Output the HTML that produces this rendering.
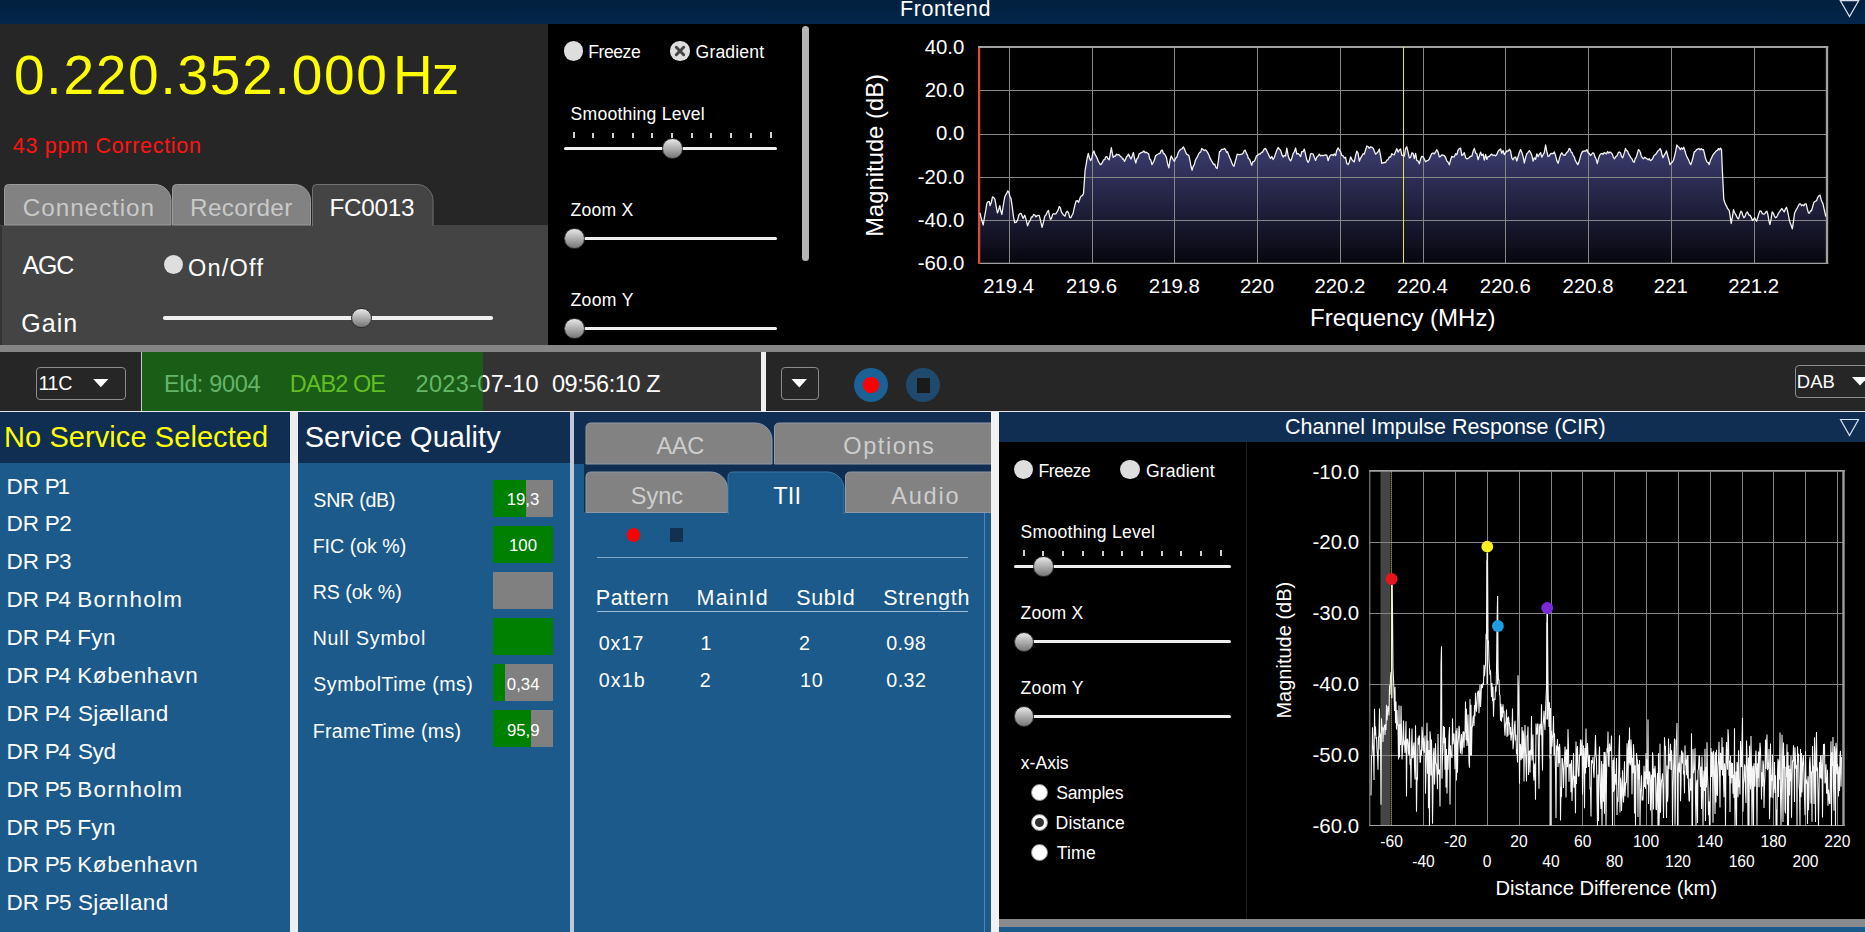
<!DOCTYPE html>
<html><head><meta charset="utf-8"><title>DAB Receiver</title>
<style>
html,body{margin:0;padding:0;}
body{width:1865px;height:932px;overflow:hidden;background:#262626;position:relative;font-family:"Liberation Sans",sans-serif;}
.t{position:absolute;white-space:pre;line-height:1;font-family:"Liberation Sans",sans-serif;}
svg{position:absolute;left:0;top:0;overflow:visible;}
.thumb{position:absolute;width:20.6px;height:20.6px;border-radius:50%;box-sizing:border-box;border:1px solid #2e2e2e;background:linear-gradient(#e2e2e2 5%,#b4b4b4 45%,#7c7c7c 95%);}
.track{position:absolute;height:3.4px;border-radius:1.7px;background:#f0f0f0;}
.dot{position:absolute;border-radius:50%;}
</style></head><body>
<div style="position:absolute;left:0px;top:0px;width:1865px;height:24px;background:linear-gradient(#02203f,#04264c);"></div>
<span class="t " style="left:899.88px;top:-1.00px;font-size:21.5px;letter-spacing:0.630px;color:#fff;">Frontend</span>
<svg width="1865" height="24"><path d="M1840.3 0.6 L1858.7 0.6 L1849.5 16.6 Z" fill="none" stroke="#d6e2f0" stroke-width="1.2"/></svg>
<div style="position:absolute;left:0px;top:24px;width:548px;height:321px;background:#262626;"></div>
<span class="t " style="left:14.00px;top:48.00px;font-size:55px;letter-spacing:1.767px;color:#ffff00;">0.220.352.000</span>
<span class="t " style="left:393.10px;top:48.00px;font-size:55px;letter-spacing:-1.150px;color:#ffff00;">Hz</span>
<span class="t " style="left:12.77px;top:136.00px;font-size:21.5px;letter-spacing:0.706px;color:#ff1414;">43 ppm Correction</span>
<div style="position:absolute;left:0px;top:225px;width:548px;height:120px;background:#444444;"></div>
<svg width="1865" height="932"><path d="M4.5 225 L4.5 188.5 Q4.5 184.5 8.5 184.5 L155.0 184.5 C163.8 184.5 171 191.7 171 200.5 L171 225 Z" fill="#828282" stroke="#9a9a9a" stroke-width="1"/></svg>
<svg width="1865" height="932"><path d="M172.5 225 L172.5 188.5 Q172.5 184.5 176.5 184.5 L294.5 184.5 C303.3 184.5 310.5 191.7 310.5 200.5 L310.5 225 Z" fill="#828282" stroke="#9a9a9a" stroke-width="1"/></svg>
<svg width="1865" height="932"><path d="M312.5 226 L312.5 188.5 Q312.5 184.5 316.5 184.5 L417.0 184.5 C425.8 184.5 433 191.7 433 200.5 L433 226 Z" fill="#444444" stroke="#707070" stroke-width="1"/></svg>
<div style="position:absolute;left:313px;top:224.5px;width:119.5px;height:2.5px;background:#444444;"></div>
<span class="t " style="left:22.79px;top:196.00px;font-size:24.3px;letter-spacing:0.926px;color:#c9c9c9;">Connection</span>
<span class="t " style="left:190.06px;top:196.00px;font-size:24.3px;letter-spacing:0.331px;color:#c9c9c9;">Recorder</span>
<span class="t " style="left:329.56px;top:196.00px;font-size:24.3px;letter-spacing:-0.294px;color:#ffffff;">FC0013</span>
<span class="t " style="left:22.50px;top:253.00px;font-size:25px;letter-spacing:-1.125px;color:#fff;">AGC</span>
<div style="position:absolute;left:0px;top:226px;width:1.5px;height:119px;background:#343434;"></div>
<div class="dot" style="left:163.5px;top:255px;width:19px;height:19px;background:#dedede"></div>
<span class="t " style="left:187.94px;top:257.00px;font-size:23.5px;letter-spacing:1.241px;color:#fff;">On/Off</span>
<span class="t " style="left:21.25px;top:311.00px;font-size:25px;letter-spacing:1.042px;color:#fff;">Gain</span>
<div class="track" style="left:353.5px;top:316.3px;width:139.0px"></div>
<div class="track" style="left:163px;top:316.3px;width:198.5px"></div>
<div class="thumb" style="left:351.2px;top:307.7px"></div>
<div style="position:absolute;left:548px;top:24px;width:1317px;height:321px;background:#000000;"></div>
<div class="dot" style="left:563.75px;top:41.25px;width:19.5px;height:19.5px;background:#dedede"></div>
<span class="t " style="left:588.19px;top:44.00px;font-size:17.6px;letter-spacing:-0.445px;color:#fff;">Freeze</span>
<div class="dot" style="left:670.25px;top:41.25px;width:19.5px;height:19.5px;background:#dedede"></div>
<svg width="1865" height="932"><path d="M676.3 47.3 L683.7 54.7 M683.7 47.3 L676.3 54.7" stroke="#464646" stroke-width="3" stroke-linecap="round"/></svg>
<span class="t " style="left:695.62px;top:44.00px;font-size:17.6px;letter-spacing:0.139px;color:#fff;">Gradient</span>
<span class="t " style="left:570.61px;top:106.00px;font-size:17.6px;letter-spacing:0.207px;color:#fff;">Smoothing Level</span>
<div class="track" style="left:664.6px;top:146.9px;width:112.89999999999998px"></div>
<div class="track" style="left:564px;top:146.9px;width:108.60000000000002px"></div>
<div style="position:absolute;left:572.50px;top:131.5px;width:2px;height:6.5px;background:#cfcfcf"></div>
<div style="position:absolute;left:592.21px;top:133px;width:2px;height:5px;background:#cfcfcf"></div>
<div style="position:absolute;left:611.92px;top:133px;width:2px;height:5px;background:#cfcfcf"></div>
<div style="position:absolute;left:631.63px;top:133px;width:2px;height:5px;background:#cfcfcf"></div>
<div style="position:absolute;left:651.34px;top:133px;width:2px;height:5px;background:#cfcfcf"></div>
<div style="position:absolute;left:671.05px;top:133px;width:2px;height:5px;background:#cfcfcf"></div>
<div style="position:absolute;left:690.76px;top:133px;width:2px;height:5px;background:#cfcfcf"></div>
<div style="position:absolute;left:710.47px;top:133px;width:2px;height:5px;background:#cfcfcf"></div>
<div style="position:absolute;left:730.18px;top:133px;width:2px;height:5px;background:#cfcfcf"></div>
<div style="position:absolute;left:749.89px;top:133px;width:2px;height:5px;background:#cfcfcf"></div>
<div style="position:absolute;left:769.60px;top:131.5px;width:2px;height:6.5px;background:#cfcfcf"></div>
<div class="thumb" style="left:662.3000000000001px;top:138.29999999999998px"></div>
<span class="t " style="left:570.47px;top:202.00px;font-size:17.6px;letter-spacing:0.256px;color:#fff;">Zoom X</span>
<div class="track" style="left:566.7px;top:236.70000000000002px;width:210.79999999999995px"></div>
<div class="track" style="left:564px;top:236.70000000000002px;width:10.700000000000045px"></div>
<div class="thumb" style="left:564.4000000000001px;top:228.1px"></div>
<span class="t " style="left:570.47px;top:292.00px;font-size:17.6px;letter-spacing:0.326px;color:#fff;">Zoom Y</span>
<div class="track" style="left:566.7px;top:326.6px;width:210.79999999999995px"></div>
<div class="track" style="left:564px;top:326.6px;width:10.700000000000045px"></div>
<div class="thumb" style="left:564.4000000000001px;top:318.0px"></div>
<div style="position:absolute;left:802px;top:25.5px;width:7px;height:235px;border-radius:3.5px;background:#b4b4b4"></div>
<svg width="1865" height="932"><defs><linearGradient id="g1" gradientUnits="userSpaceOnUse" x1="0" y1="150" x2="0" y2="263"><stop offset="0" stop-color="#3a3a6c"/><stop offset="1" stop-color="#07070f"/></linearGradient></defs><polygon points="980.0,263.5 980.0,212.9 981.1,217.8 982.1,221.3 983.2,225.0 984.4,217.6 985.7,210.7 986.9,203.2 988.1,201.7 989.3,201.6 990.1,205.6 991.3,202.5 992.5,196.8 993.7,197.6 994.9,199.2 996.2,206.4 997.4,212.9 998.6,210.2 999.8,205.6 1000.8,211.0 1001.9,214.5 1003.2,206.0 1004.6,197.6 1005.7,194.8 1006.8,193.2 1007.8,190.8 1008.9,192.3 1010.0,196.8 1011.0,198.4 1012.3,207.3 1013.5,216.9 1014.7,222.5 1016.1,222.3 1017.5,220.1 1019.1,214.5 1020.1,213.4 1021.2,213.7 1022.1,215.8 1023.1,218.5 1024.7,215.3 1025.7,218.1 1026.7,222.1 1027.6,225.8 1029.0,222.1 1030.4,220.1 1031.4,216.9 1032.5,217.0 1033.6,214.5 1034.8,215.1 1036.0,216.9 1037.1,215.7 1038.1,215.3 1039.2,215.3 1040.2,219.3 1041.1,223.2 1042.1,227.4 1043.5,222.1 1044.8,216.1 1046.1,214.7 1047.3,212.0 1048.5,210.5 1049.5,216.1 1050.5,219.3 1051.5,218.4 1052.6,214.3 1053.7,213.7 1054.8,214.1 1055.8,213.8 1056.9,212.1 1058.1,210.1 1059.3,206.5 1060.4,207.9 1061.5,212.2 1062.5,213.7 1063.8,215.3 1065.0,216.1 1066.2,212.3 1067.4,211.3 1068.6,213.1 1069.8,217.7 1070.9,217.6 1071.9,215.5 1073.0,213.7 1074.1,208.7 1075.2,204.0 1076.2,200.8 1077.4,200.6 1078.6,202.4 1079.9,198.5 1081.1,196.0 1082.3,195.6 1083.5,193.6 1085.1,170.2 1086.2,164.2 1087.2,158.0 1088.3,153.3 1089.5,158.1 1090.7,160.6 1091.8,158.2 1092.9,153.2 1093.9,150.9 1095.0,154.4 1096.1,156.1 1097.2,158.2 1098.2,161.1 1099.3,162.9 1100.4,164.6 1101.4,164.1 1102.5,162.2 1103.6,159.8 1104.7,159.7 1105.7,156.8 1106.8,156.6 1108.0,158.7 1109.2,159.8 1110.3,153.8 1111.3,147.7 1112.3,153.2 1113.2,157.4 1114.3,156.1 1115.4,156.3 1116.5,154.1 1117.5,154.9 1118.5,154.7 1119.5,155.2 1120.5,156.6 1121.5,156.8 1122.5,159.0 1123.5,158.9 1124.5,161.4 1125.5,159.5 1126.5,156.8 1127.5,155.9 1128.5,154.1 1129.7,156.6 1131.0,159.0 1132.2,155.9 1133.4,152.5 1134.6,158.8 1135.8,163.0 1136.9,158.7 1137.9,158.0 1139.0,154.1 1140.2,153.2 1141.4,152.7 1142.6,152.2 1143.8,150.9 1145.0,152.7 1146.2,152.2 1147.5,153.1 1148.7,154.1 1149.7,158.9 1150.8,159.9 1151.9,164.6 1153.1,162.6 1154.3,160.2 1155.5,156.0 1156.7,154.9 1157.8,154.3 1159.0,153.5 1160.1,153.3 1161.2,150.6 1162.3,150.1 1163.3,153.3 1164.4,153.8 1165.4,155.5 1166.4,157.4 1167.6,163.7 1168.8,167.8 1170.0,160.5 1171.2,155.8 1172.3,158.2 1173.3,159.9 1174.4,161.4 1175.6,158.3 1176.8,157.2 1178.0,153.2 1179.2,150.9 1180.2,149.8 1181.3,149.0 1182.3,148.7 1183.3,146.9 1184.3,148.5 1185.4,151.5 1186.5,154.1 1187.7,154.7 1188.9,155.8 1190.0,160.7 1191.0,166.3 1192.1,170.2 1193.2,166.4 1194.3,164.7 1195.3,160.6 1196.4,158.3 1197.5,156.6 1198.6,153.9 1199.6,152.6 1200.7,151.9 1201.8,148.5 1203.0,149.5 1204.2,150.5 1205.4,149.8 1206.6,150.9 1207.8,152.8 1209.0,155.2 1210.2,158.4 1211.4,160.6 1212.6,162.6 1213.7,164.6 1214.8,164.1 1215.9,167.6 1217.1,168.6 1218.3,161.3 1219.5,151.7 1220.5,151.3 1221.5,149.3 1222.5,149.4 1223.5,149.3 1224.5,148.5 1225.5,149.7 1226.5,152.3 1227.5,151.7 1228.6,154.7 1229.7,157.5 1230.7,159.8 1231.8,162.7 1232.9,165.2 1234.0,166.2 1235.0,162.5 1236.1,158.5 1237.2,154.1 1238.4,154.5 1239.6,154.7 1240.8,154.4 1242.0,154.1 1243.1,153.3 1244.2,150.7 1245.2,150.1 1246.3,153.1 1247.4,155.1 1248.4,158.5 1249.5,159.2 1250.6,162.0 1251.7,165.4 1252.9,161.7 1254.1,161.3 1255.3,159.3 1256.5,155.8 1257.7,155.4 1258.9,153.8 1260.1,154.2 1261.3,152.5 1262.3,152.3 1263.3,150.7 1264.3,148.8 1265.3,148.5 1266.4,150.0 1267.4,152.3 1268.4,154.0 1269.4,156.6 1270.6,158.4 1271.8,156.5 1273.1,159.5 1274.3,157.5 1275.6,153.6 1276.8,150.2 1278.1,147.5 1279.3,149.0 1280.6,150.2 1281.8,154.4 1283.1,157.0 1284.3,155.5 1285.6,156.0 1286.8,148.2 1288.1,155.5 1289.3,159.1 1290.6,160.9 1291.8,158.3 1293.1,153.5 1294.3,151.8 1295.6,148.0 1296.8,154.1 1298.1,153.4 1299.3,154.7 1300.6,156.5 1301.8,151.7 1303.1,151.6 1304.3,149.1 1305.6,154.7 1306.8,159.9 1308.1,162.4 1309.3,160.3 1310.6,153.9 1311.8,153.5 1313.1,154.0 1314.3,157.2 1315.6,160.4 1316.8,157.2 1318.1,156.0 1319.3,154.1 1320.6,156.0 1321.8,155.2 1323.1,155.8 1324.3,155.1 1325.6,155.0 1326.8,155.2 1328.1,160.7 1329.3,157.1 1330.6,155.0 1331.8,154.6 1333.1,155.6 1334.3,153.9 1335.6,155.5 1336.8,150.2 1338.1,147.9 1339.3,150.0 1340.6,151.6 1341.8,155.4 1343.1,155.8 1344.3,158.0 1345.6,157.3 1346.8,163.5 1348.1,164.5 1349.3,162.4 1350.6,156.9 1351.8,159.4 1353.1,161.1 1354.3,161.9 1355.6,155.4 1356.8,151.2 1358.1,153.4 1359.3,161.2 1360.6,158.1 1361.8,156.1 1363.1,153.8 1364.3,154.0 1365.6,149.9 1366.8,146.0 1368.1,146.6 1369.3,148.3 1370.6,146.8 1371.8,147.3 1373.1,148.3 1374.3,151.1 1375.6,154.2 1376.8,153.1 1378.1,151.7 1379.3,149.2 1380.6,156.1 1381.8,163.4 1383.1,162.8 1384.3,162.5 1385.6,162.5 1386.8,160.2 1388.1,159.6 1389.3,157.0 1390.6,157.1 1391.8,153.7 1393.1,154.6 1394.3,154.8 1395.6,151.4 1396.8,148.8 1398.1,152.1 1399.3,150.2 1400.6,149.0 1401.8,155.2 1403.1,155.7 1404.3,156.1 1405.6,148.4 1406.8,146.8 1408.1,152.2 1409.3,157.8 1410.6,157.3 1411.8,152.8 1413.1,153.4 1414.3,158.6 1415.6,153.4 1416.8,160.7 1418.1,160.9 1419.3,163.7 1420.6,159.1 1421.8,156.3 1423.1,156.7 1424.3,159.1 1425.6,161.7 1426.8,160.8 1428.1,160.3 1429.3,159.3 1430.6,156.0 1431.8,153.6 1433.1,153.0 1434.3,153.9 1435.6,151.8 1436.8,149.7 1438.1,152.1 1439.3,156.8 1440.6,156.3 1441.8,155.0 1443.1,155.2 1444.3,155.7 1445.6,157.5 1446.8,160.9 1448.1,162.2 1449.3,164.8 1450.6,160.0 1451.8,156.3 1453.1,157.1 1454.3,156.7 1455.6,153.8 1456.8,154.7 1458.1,150.2 1459.3,148.6 1460.6,148.2 1461.8,155.3 1463.1,154.7 1464.3,152.7 1465.6,157.7 1466.8,158.9 1468.1,158.4 1469.3,157.5 1470.6,156.2 1471.8,156.3 1473.1,151.3 1474.3,148.4 1475.6,152.9 1476.8,153.8 1478.1,159.7 1479.3,156.1 1480.6,152.1 1481.8,155.5 1483.1,154.1 1484.3,160.0 1485.6,154.5 1486.8,159.4 1488.1,156.4 1489.3,156.6 1490.6,154.8 1491.8,154.2 1493.1,155.5 1494.3,155.0 1495.6,155.9 1496.8,154.5 1498.1,151.3 1499.3,150.0 1500.6,149.0 1501.8,153.3 1503.1,150.5 1504.3,154.6 1505.6,152.7 1506.8,150.8 1508.1,151.3 1509.3,149.2 1510.6,151.0 1511.8,157.9 1513.1,159.8 1514.3,157.5 1515.6,157.0 1516.8,161.0 1518.1,156.7 1519.3,152.6 1520.6,149.6 1521.8,152.5 1523.1,156.6 1524.3,163.0 1525.6,157.5 1526.8,153.7 1528.1,152.4 1529.3,150.6 1530.6,152.6 1531.8,155.2 1533.1,161.1 1534.3,157.8 1535.6,159.3 1536.8,153.9 1538.1,156.6 1539.3,154.3 1540.6,152.6 1541.8,157.1 1543.1,154.8 1544.3,152.6 1545.6,145.0 1546.8,151.4 1548.1,156.5 1549.3,156.0 1550.6,153.6 1551.8,153.4 1553.1,153.6 1554.3,152.0 1555.6,155.6 1556.8,160.6 1558.1,163.3 1559.3,158.9 1560.6,154.6 1561.8,152.8 1563.1,154.8 1565.0,155.4 1566.0,153.5 1567.1,152.3 1568.1,151.2 1569.2,148.5 1570.1,149.1 1571.1,152.1 1572.1,152.6 1573.1,155.4 1574.2,156.8 1575.4,160.7 1576.5,162.5 1577.7,164.6 1578.8,162.4 1580.0,158.1 1581.2,153.9 1582.3,151.9 1583.5,151.1 1584.6,151.0 1585.8,151.2 1586.9,149.6 1588.1,152.7 1589.2,153.4 1590.4,155.4 1591.5,154.4 1592.7,152.9 1593.8,153.1 1595.0,156.9 1596.2,159.3 1597.3,163.5 1598.5,158.6 1599.6,155.4 1600.8,153.8 1601.9,153.3 1603.1,154.4 1604.2,152.6 1605.4,153.1 1606.5,153.9 1607.7,151.5 1608.8,153.1 1610.0,151.9 1611.2,152.8 1612.3,154.2 1613.5,157.6 1614.6,158.8 1615.8,156.5 1616.9,155.9 1618.1,152.9 1619.2,151.9 1620.4,152.8 1621.5,156.4 1622.7,157.7 1623.6,155.1 1624.5,152.4 1625.5,148.5 1626.5,150.7 1627.5,150.9 1628.6,154.0 1629.6,155.4 1630.8,157.6 1631.9,158.8 1633.1,161.6 1634.2,162.3 1635.3,158.5 1636.3,157.1 1637.4,153.3 1638.4,149.6 1639.4,150.5 1640.4,152.5 1641.3,156.0 1642.3,157.7 1643.5,158.7 1644.6,157.3 1645.8,158.1 1646.9,158.8 1648.1,159.7 1649.2,158.6 1650.4,160.6 1651.5,160.0 1652.7,158.4 1653.9,155.7 1655.0,154.8 1656.2,153.7 1657.3,151.9 1658.2,150.6 1659.2,150.0 1660.1,148.5 1661.1,150.7 1662.1,155.3 1663.1,157.7 1664.2,155.1 1665.4,153.4 1666.5,150.8 1667.7,155.7 1668.9,159.8 1670.0,164.6 1671.2,162.8 1672.3,162.2 1673.5,160.0 1674.6,156.1 1675.8,150.7 1676.9,145.0 1678.1,146.7 1679.2,147.6 1680.4,149.6 1681.5,147.8 1682.7,149.2 1683.9,147.3 1685.0,151.3 1686.2,155.0 1687.3,157.7 1688.5,159.6 1689.6,162.6 1690.8,164.6 1691.9,161.5 1693.1,157.0 1694.2,151.9 1695.4,151.3 1696.5,149.7 1697.7,149.2 1698.9,148.5 1700.0,149.7 1701.2,148.7 1702.3,149.8 1703.5,149.6 1704.4,153.3 1705.3,157.5 1706.2,160.0 1707.2,162.3 1708.2,162.6 1709.2,164.6 1710.4,160.3 1711.5,157.9 1712.7,155.4 1713.9,153.7 1715.0,152.5 1716.2,150.8 1717.3,150.4 1718.5,148.5 1719.5,149.8 1720.5,148.1 1721.5,149.6 1722.4,171.5 1723.8,199.2 1724.7,202.3 1725.6,204.6 1726.6,206.2 1727.5,208.6 1728.4,209.4 1729.3,210.8 1730.2,216.6 1731.2,223.5 1732.3,217.4 1733.5,209.6 1734.4,212.3 1735.3,213.9 1736.2,215.4 1737.4,218.1 1738.6,218.9 1739.7,214.7 1740.9,211.2 1741.9,212.4 1742.9,215.7 1743.9,217.7 1745.0,216.5 1746.2,213.1 1747.3,211.9 1748.2,213.7 1749.2,215.3 1750.1,215.4 1751.2,217.3 1752.4,220.5 1753.6,219.3 1754.7,217.7 1755.6,219.9 1756.6,221.2 1757.7,217.6 1758.9,213.5 1760.0,210.8 1761.2,211.3 1762.3,213.7 1763.5,214.2 1764.6,213.9 1765.8,212.1 1766.9,211.2 1767.9,214.7 1768.9,220.9 1769.9,224.6 1771.1,218.9 1772.2,211.9 1773.3,213.2 1774.4,216.0 1775.5,217.7 1776.5,217.1 1777.5,215.5 1778.5,213.1 1779.6,211.6 1780.8,209.9 1781.9,208.5 1783.1,210.4 1784.2,211.9 1785.4,208.9 1786.6,207.3 1787.5,210.8 1788.4,215.0 1789.3,220.0 1790.3,223.4 1791.3,225.5 1792.3,228.8 1793.5,221.1 1794.6,213.1 1795.6,210.9 1796.6,209.3 1797.6,207.3 1798.6,205.3 1799.5,203.9 1800.4,203.9 1801.6,205.7 1802.7,204.8 1803.9,205.7 1805.0,203.8 1806.2,203.9 1807.3,208.8 1808.5,213.1 1809.5,213.0 1810.5,210.7 1811.5,210.8 1812.6,207.0 1813.8,202.7 1814.7,201.6 1815.6,201.2 1816.6,200.4 1817.7,197.5 1818.9,195.7 1820.0,195.1 1821.0,199.2 1822.0,201.8 1823.0,203.9 1823.9,208.1 1824.9,212.5 1825.8,216.5 1825.8,263.5" fill="url(#g1)"/><line x1="1009.5" y1="47" x2="1009.5" y2="263.5" stroke="#868686" stroke-width="1"/><line x1="1092.5" y1="47" x2="1092.5" y2="263.5" stroke="#868686" stroke-width="1"/><line x1="1174.5" y1="47" x2="1174.5" y2="263.5" stroke="#868686" stroke-width="1"/><line x1="1257.5" y1="47" x2="1257.5" y2="263.5" stroke="#868686" stroke-width="1"/><line x1="1340.5" y1="47" x2="1340.5" y2="263.5" stroke="#868686" stroke-width="1"/><line x1="1423.5" y1="47" x2="1423.5" y2="263.5" stroke="#868686" stroke-width="1"/><line x1="1505.5" y1="47" x2="1505.5" y2="263.5" stroke="#868686" stroke-width="1"/><line x1="1588.5" y1="47" x2="1588.5" y2="263.5" stroke="#868686" stroke-width="1"/><line x1="1671.5" y1="47" x2="1671.5" y2="263.5" stroke="#868686" stroke-width="1"/><line x1="1754.5" y1="47" x2="1754.5" y2="263.5" stroke="#868686" stroke-width="1"/><line x1="979" y1="90.5" x2="1827" y2="90.5" stroke="#868686" stroke-width="1"/><line x1="979" y1="134.5" x2="1827" y2="134.5" stroke="#868686" stroke-width="1"/><line x1="979" y1="177.5" x2="1827" y2="177.5" stroke="#868686" stroke-width="1"/><line x1="979" y1="220.5" x2="1827" y2="220.5" stroke="#868686" stroke-width="1"/><line x1="978" y1="47" x2="1828.2" y2="47" stroke="#a2a2a2" stroke-width="1.8"/><line x1="1827" y1="46.1" x2="1827" y2="264" stroke="#a0a0a0" stroke-width="2.4"/><line x1="978" y1="263.4" x2="1828.2" y2="263.4" stroke="#a2a2a2" stroke-width="1.2"/><line x1="979.1" y1="47.9" x2="979.1" y2="264" stroke="#d8483c" stroke-width="2.3"/><line x1="1403.5" y1="47" x2="1403.5" y2="263.5" stroke="#e6e63c" stroke-width="1"/><polyline points="980.0,212.9 981.1,217.8 982.1,221.3 983.2,225.0 984.4,217.6 985.7,210.7 986.9,203.2 988.1,201.7 989.3,201.6 990.1,205.6 991.3,202.5 992.5,196.8 993.7,197.6 994.9,199.2 996.2,206.4 997.4,212.9 998.6,210.2 999.8,205.6 1000.8,211.0 1001.9,214.5 1003.2,206.0 1004.6,197.6 1005.7,194.8 1006.8,193.2 1007.8,190.8 1008.9,192.3 1010.0,196.8 1011.0,198.4 1012.3,207.3 1013.5,216.9 1014.7,222.5 1016.1,222.3 1017.5,220.1 1019.1,214.5 1020.1,213.4 1021.2,213.7 1022.1,215.8 1023.1,218.5 1024.7,215.3 1025.7,218.1 1026.7,222.1 1027.6,225.8 1029.0,222.1 1030.4,220.1 1031.4,216.9 1032.5,217.0 1033.6,214.5 1034.8,215.1 1036.0,216.9 1037.1,215.7 1038.1,215.3 1039.2,215.3 1040.2,219.3 1041.1,223.2 1042.1,227.4 1043.5,222.1 1044.8,216.1 1046.1,214.7 1047.3,212.0 1048.5,210.5 1049.5,216.1 1050.5,219.3 1051.5,218.4 1052.6,214.3 1053.7,213.7 1054.8,214.1 1055.8,213.8 1056.9,212.1 1058.1,210.1 1059.3,206.5 1060.4,207.9 1061.5,212.2 1062.5,213.7 1063.8,215.3 1065.0,216.1 1066.2,212.3 1067.4,211.3 1068.6,213.1 1069.8,217.7 1070.9,217.6 1071.9,215.5 1073.0,213.7 1074.1,208.7 1075.2,204.0 1076.2,200.8 1077.4,200.6 1078.6,202.4 1079.9,198.5 1081.1,196.0 1082.3,195.6 1083.5,193.6 1085.1,170.2 1086.2,164.2 1087.2,158.0 1088.3,153.3 1089.5,158.1 1090.7,160.6 1091.8,158.2 1092.9,153.2 1093.9,150.9 1095.0,154.4 1096.1,156.1 1097.2,158.2 1098.2,161.1 1099.3,162.9 1100.4,164.6 1101.4,164.1 1102.5,162.2 1103.6,159.8 1104.7,159.7 1105.7,156.8 1106.8,156.6 1108.0,158.7 1109.2,159.8 1110.3,153.8 1111.3,147.7 1112.3,153.2 1113.2,157.4 1114.3,156.1 1115.4,156.3 1116.5,154.1 1117.5,154.9 1118.5,154.7 1119.5,155.2 1120.5,156.6 1121.5,156.8 1122.5,159.0 1123.5,158.9 1124.5,161.4 1125.5,159.5 1126.5,156.8 1127.5,155.9 1128.5,154.1 1129.7,156.6 1131.0,159.0 1132.2,155.9 1133.4,152.5 1134.6,158.8 1135.8,163.0 1136.9,158.7 1137.9,158.0 1139.0,154.1 1140.2,153.2 1141.4,152.7 1142.6,152.2 1143.8,150.9 1145.0,152.7 1146.2,152.2 1147.5,153.1 1148.7,154.1 1149.7,158.9 1150.8,159.9 1151.9,164.6 1153.1,162.6 1154.3,160.2 1155.5,156.0 1156.7,154.9 1157.8,154.3 1159.0,153.5 1160.1,153.3 1161.2,150.6 1162.3,150.1 1163.3,153.3 1164.4,153.8 1165.4,155.5 1166.4,157.4 1167.6,163.7 1168.8,167.8 1170.0,160.5 1171.2,155.8 1172.3,158.2 1173.3,159.9 1174.4,161.4 1175.6,158.3 1176.8,157.2 1178.0,153.2 1179.2,150.9 1180.2,149.8 1181.3,149.0 1182.3,148.7 1183.3,146.9 1184.3,148.5 1185.4,151.5 1186.5,154.1 1187.7,154.7 1188.9,155.8 1190.0,160.7 1191.0,166.3 1192.1,170.2 1193.2,166.4 1194.3,164.7 1195.3,160.6 1196.4,158.3 1197.5,156.6 1198.6,153.9 1199.6,152.6 1200.7,151.9 1201.8,148.5 1203.0,149.5 1204.2,150.5 1205.4,149.8 1206.6,150.9 1207.8,152.8 1209.0,155.2 1210.2,158.4 1211.4,160.6 1212.6,162.6 1213.7,164.6 1214.8,164.1 1215.9,167.6 1217.1,168.6 1218.3,161.3 1219.5,151.7 1220.5,151.3 1221.5,149.3 1222.5,149.4 1223.5,149.3 1224.5,148.5 1225.5,149.7 1226.5,152.3 1227.5,151.7 1228.6,154.7 1229.7,157.5 1230.7,159.8 1231.8,162.7 1232.9,165.2 1234.0,166.2 1235.0,162.5 1236.1,158.5 1237.2,154.1 1238.4,154.5 1239.6,154.7 1240.8,154.4 1242.0,154.1 1243.1,153.3 1244.2,150.7 1245.2,150.1 1246.3,153.1 1247.4,155.1 1248.4,158.5 1249.5,159.2 1250.6,162.0 1251.7,165.4 1252.9,161.7 1254.1,161.3 1255.3,159.3 1256.5,155.8 1257.7,155.4 1258.9,153.8 1260.1,154.2 1261.3,152.5 1262.3,152.3 1263.3,150.7 1264.3,148.8 1265.3,148.5 1266.4,150.0 1267.4,152.3 1268.4,154.0 1269.4,156.6 1270.6,158.4 1271.8,156.5 1273.1,159.5 1274.3,157.5 1275.6,153.6 1276.8,150.2 1278.1,147.5 1279.3,149.0 1280.6,150.2 1281.8,154.4 1283.1,157.0 1284.3,155.5 1285.6,156.0 1286.8,148.2 1288.1,155.5 1289.3,159.1 1290.6,160.9 1291.8,158.3 1293.1,153.5 1294.3,151.8 1295.6,148.0 1296.8,154.1 1298.1,153.4 1299.3,154.7 1300.6,156.5 1301.8,151.7 1303.1,151.6 1304.3,149.1 1305.6,154.7 1306.8,159.9 1308.1,162.4 1309.3,160.3 1310.6,153.9 1311.8,153.5 1313.1,154.0 1314.3,157.2 1315.6,160.4 1316.8,157.2 1318.1,156.0 1319.3,154.1 1320.6,156.0 1321.8,155.2 1323.1,155.8 1324.3,155.1 1325.6,155.0 1326.8,155.2 1328.1,160.7 1329.3,157.1 1330.6,155.0 1331.8,154.6 1333.1,155.6 1334.3,153.9 1335.6,155.5 1336.8,150.2 1338.1,147.9 1339.3,150.0 1340.6,151.6 1341.8,155.4 1343.1,155.8 1344.3,158.0 1345.6,157.3 1346.8,163.5 1348.1,164.5 1349.3,162.4 1350.6,156.9 1351.8,159.4 1353.1,161.1 1354.3,161.9 1355.6,155.4 1356.8,151.2 1358.1,153.4 1359.3,161.2 1360.6,158.1 1361.8,156.1 1363.1,153.8 1364.3,154.0 1365.6,149.9 1366.8,146.0 1368.1,146.6 1369.3,148.3 1370.6,146.8 1371.8,147.3 1373.1,148.3 1374.3,151.1 1375.6,154.2 1376.8,153.1 1378.1,151.7 1379.3,149.2 1380.6,156.1 1381.8,163.4 1383.1,162.8 1384.3,162.5 1385.6,162.5 1386.8,160.2 1388.1,159.6 1389.3,157.0 1390.6,157.1 1391.8,153.7 1393.1,154.6 1394.3,154.8 1395.6,151.4 1396.8,148.8 1398.1,152.1 1399.3,150.2 1400.6,149.0 1401.8,155.2 1403.1,155.7 1404.3,156.1 1405.6,148.4 1406.8,146.8 1408.1,152.2 1409.3,157.8 1410.6,157.3 1411.8,152.8 1413.1,153.4 1414.3,158.6 1415.6,153.4 1416.8,160.7 1418.1,160.9 1419.3,163.7 1420.6,159.1 1421.8,156.3 1423.1,156.7 1424.3,159.1 1425.6,161.7 1426.8,160.8 1428.1,160.3 1429.3,159.3 1430.6,156.0 1431.8,153.6 1433.1,153.0 1434.3,153.9 1435.6,151.8 1436.8,149.7 1438.1,152.1 1439.3,156.8 1440.6,156.3 1441.8,155.0 1443.1,155.2 1444.3,155.7 1445.6,157.5 1446.8,160.9 1448.1,162.2 1449.3,164.8 1450.6,160.0 1451.8,156.3 1453.1,157.1 1454.3,156.7 1455.6,153.8 1456.8,154.7 1458.1,150.2 1459.3,148.6 1460.6,148.2 1461.8,155.3 1463.1,154.7 1464.3,152.7 1465.6,157.7 1466.8,158.9 1468.1,158.4 1469.3,157.5 1470.6,156.2 1471.8,156.3 1473.1,151.3 1474.3,148.4 1475.6,152.9 1476.8,153.8 1478.1,159.7 1479.3,156.1 1480.6,152.1 1481.8,155.5 1483.1,154.1 1484.3,160.0 1485.6,154.5 1486.8,159.4 1488.1,156.4 1489.3,156.6 1490.6,154.8 1491.8,154.2 1493.1,155.5 1494.3,155.0 1495.6,155.9 1496.8,154.5 1498.1,151.3 1499.3,150.0 1500.6,149.0 1501.8,153.3 1503.1,150.5 1504.3,154.6 1505.6,152.7 1506.8,150.8 1508.1,151.3 1509.3,149.2 1510.6,151.0 1511.8,157.9 1513.1,159.8 1514.3,157.5 1515.6,157.0 1516.8,161.0 1518.1,156.7 1519.3,152.6 1520.6,149.6 1521.8,152.5 1523.1,156.6 1524.3,163.0 1525.6,157.5 1526.8,153.7 1528.1,152.4 1529.3,150.6 1530.6,152.6 1531.8,155.2 1533.1,161.1 1534.3,157.8 1535.6,159.3 1536.8,153.9 1538.1,156.6 1539.3,154.3 1540.6,152.6 1541.8,157.1 1543.1,154.8 1544.3,152.6 1545.6,145.0 1546.8,151.4 1548.1,156.5 1549.3,156.0 1550.6,153.6 1551.8,153.4 1553.1,153.6 1554.3,152.0 1555.6,155.6 1556.8,160.6 1558.1,163.3 1559.3,158.9 1560.6,154.6 1561.8,152.8 1563.1,154.8 1565.0,155.4 1566.0,153.5 1567.1,152.3 1568.1,151.2 1569.2,148.5 1570.1,149.1 1571.1,152.1 1572.1,152.6 1573.1,155.4 1574.2,156.8 1575.4,160.7 1576.5,162.5 1577.7,164.6 1578.8,162.4 1580.0,158.1 1581.2,153.9 1582.3,151.9 1583.5,151.1 1584.6,151.0 1585.8,151.2 1586.9,149.6 1588.1,152.7 1589.2,153.4 1590.4,155.4 1591.5,154.4 1592.7,152.9 1593.8,153.1 1595.0,156.9 1596.2,159.3 1597.3,163.5 1598.5,158.6 1599.6,155.4 1600.8,153.8 1601.9,153.3 1603.1,154.4 1604.2,152.6 1605.4,153.1 1606.5,153.9 1607.7,151.5 1608.8,153.1 1610.0,151.9 1611.2,152.8 1612.3,154.2 1613.5,157.6 1614.6,158.8 1615.8,156.5 1616.9,155.9 1618.1,152.9 1619.2,151.9 1620.4,152.8 1621.5,156.4 1622.7,157.7 1623.6,155.1 1624.5,152.4 1625.5,148.5 1626.5,150.7 1627.5,150.9 1628.6,154.0 1629.6,155.4 1630.8,157.6 1631.9,158.8 1633.1,161.6 1634.2,162.3 1635.3,158.5 1636.3,157.1 1637.4,153.3 1638.4,149.6 1639.4,150.5 1640.4,152.5 1641.3,156.0 1642.3,157.7 1643.5,158.7 1644.6,157.3 1645.8,158.1 1646.9,158.8 1648.1,159.7 1649.2,158.6 1650.4,160.6 1651.5,160.0 1652.7,158.4 1653.9,155.7 1655.0,154.8 1656.2,153.7 1657.3,151.9 1658.2,150.6 1659.2,150.0 1660.1,148.5 1661.1,150.7 1662.1,155.3 1663.1,157.7 1664.2,155.1 1665.4,153.4 1666.5,150.8 1667.7,155.7 1668.9,159.8 1670.0,164.6 1671.2,162.8 1672.3,162.2 1673.5,160.0 1674.6,156.1 1675.8,150.7 1676.9,145.0 1678.1,146.7 1679.2,147.6 1680.4,149.6 1681.5,147.8 1682.7,149.2 1683.9,147.3 1685.0,151.3 1686.2,155.0 1687.3,157.7 1688.5,159.6 1689.6,162.6 1690.8,164.6 1691.9,161.5 1693.1,157.0 1694.2,151.9 1695.4,151.3 1696.5,149.7 1697.7,149.2 1698.9,148.5 1700.0,149.7 1701.2,148.7 1702.3,149.8 1703.5,149.6 1704.4,153.3 1705.3,157.5 1706.2,160.0 1707.2,162.3 1708.2,162.6 1709.2,164.6 1710.4,160.3 1711.5,157.9 1712.7,155.4 1713.9,153.7 1715.0,152.5 1716.2,150.8 1717.3,150.4 1718.5,148.5 1719.5,149.8 1720.5,148.1 1721.5,149.6 1722.4,171.5 1723.8,199.2 1724.7,202.3 1725.6,204.6 1726.6,206.2 1727.5,208.6 1728.4,209.4 1729.3,210.8 1730.2,216.6 1731.2,223.5 1732.3,217.4 1733.5,209.6 1734.4,212.3 1735.3,213.9 1736.2,215.4 1737.4,218.1 1738.6,218.9 1739.7,214.7 1740.9,211.2 1741.9,212.4 1742.9,215.7 1743.9,217.7 1745.0,216.5 1746.2,213.1 1747.3,211.9 1748.2,213.7 1749.2,215.3 1750.1,215.4 1751.2,217.3 1752.4,220.5 1753.6,219.3 1754.7,217.7 1755.6,219.9 1756.6,221.2 1757.7,217.6 1758.9,213.5 1760.0,210.8 1761.2,211.3 1762.3,213.7 1763.5,214.2 1764.6,213.9 1765.8,212.1 1766.9,211.2 1767.9,214.7 1768.9,220.9 1769.9,224.6 1771.1,218.9 1772.2,211.9 1773.3,213.2 1774.4,216.0 1775.5,217.7 1776.5,217.1 1777.5,215.5 1778.5,213.1 1779.6,211.6 1780.8,209.9 1781.9,208.5 1783.1,210.4 1784.2,211.9 1785.4,208.9 1786.6,207.3 1787.5,210.8 1788.4,215.0 1789.3,220.0 1790.3,223.4 1791.3,225.5 1792.3,228.8 1793.5,221.1 1794.6,213.1 1795.6,210.9 1796.6,209.3 1797.6,207.3 1798.6,205.3 1799.5,203.9 1800.4,203.9 1801.6,205.7 1802.7,204.8 1803.9,205.7 1805.0,203.8 1806.2,203.9 1807.3,208.8 1808.5,213.1 1809.5,213.0 1810.5,210.7 1811.5,210.8 1812.6,207.0 1813.8,202.7 1814.7,201.6 1815.6,201.2 1816.6,200.4 1817.7,197.5 1818.9,195.7 1820.0,195.1 1821.0,199.2 1822.0,201.8 1823.0,203.9 1823.9,208.1 1824.9,212.5 1825.8,216.5" fill="none" stroke="#f2f2f2" stroke-width="1.3" stroke-linejoin="round"/></svg>
<span class="t " style="left:924.64px;top:37.00px;font-size:20.4px;letter-spacing:0.000px;color:#fff;">40.0</span>
<span class="t " style="left:924.64px;top:80.00px;font-size:20.4px;letter-spacing:0.000px;color:#fff;">20.0</span>
<span class="t " style="left:935.96px;top:123.00px;font-size:20.4px;letter-spacing:0.000px;color:#fff;">0.0</span>
<span class="t " style="left:917.80px;top:167.00px;font-size:20.4px;letter-spacing:0.000px;color:#fff;">-20.0</span>
<span class="t " style="left:917.80px;top:210.00px;font-size:20.4px;letter-spacing:0.000px;color:#fff;">-40.0</span>
<span class="t " style="left:917.80px;top:253.00px;font-size:20.4px;letter-spacing:0.000px;color:#fff;">-60.0</span>
<span class="t " style="left:983.14px;top:276.00px;font-size:20.4px;letter-spacing:0.000px;color:#fff;">219.4</span>
<span class="t " style="left:1066.05px;top:276.00px;font-size:20.4px;letter-spacing:0.000px;color:#fff;">219.6</span>
<span class="t " style="left:1148.80px;top:276.00px;font-size:20.4px;letter-spacing:0.000px;color:#fff;">219.8</span>
<span class="t " style="left:1240.01px;top:276.00px;font-size:20.4px;letter-spacing:0.000px;color:#fff;">220</span>
<span class="t " style="left:1314.40px;top:276.00px;font-size:20.4px;letter-spacing:0.000px;color:#fff;">220.2</span>
<span class="t " style="left:1396.90px;top:276.00px;font-size:20.4px;letter-spacing:0.000px;color:#fff;">220.4</span>
<span class="t " style="left:1479.80px;top:276.00px;font-size:20.4px;letter-spacing:0.000px;color:#fff;">220.6</span>
<span class="t " style="left:1562.55px;top:276.00px;font-size:20.4px;letter-spacing:0.000px;color:#fff;">220.8</span>
<span class="t " style="left:1653.87px;top:276.00px;font-size:20.4px;letter-spacing:0.000px;color:#fff;">221</span>
<span class="t " style="left:1728.15px;top:276.00px;font-size:20.4px;letter-spacing:0.000px;color:#fff;">221.2</span>
<span class="t " style="left:1310.02px;top:306.00px;font-size:24px;letter-spacing:0.000px;color:#fff;">Frequency (MHz)</span>
<span class="t" style="left:0;top:0;font-size:23.8px;color:#fff;transform-origin:0 0;transform:translate(863.05px,236.77px) rotate(-90deg)">Magnitude (dB)</span>
<div style="position:absolute;left:0px;top:345px;width:1865px;height:7px;background:#868686;"></div>
<div style="position:absolute;left:0px;top:352px;width:1865px;height:59px;background:#262626;"></div>
<div style="position:absolute;left:141px;top:352px;width:1px;height:59px;background:#c8c8c8;"></div>
<div style="position:absolute;left:142px;top:352px;width:341px;height:59px;background:#195d17;"></div>
<div style="position:absolute;left:483px;top:352px;width:278px;height:59px;background:#333333;"></div>
<div style="position:absolute;left:761px;top:352px;width:5px;height:59px;background:#f0f0f0;"></div>
<div style="position:absolute;left:0px;top:411px;width:1865px;height:1.3px;background:#e6e6e6;"></div>
<div style="position:absolute;left:36px;top:367px;width:88px;height:31px;border:1px solid #8c8c8c;border-radius:4px;background:#262626"></div>
<span class="t " style="left:38.42px;top:374.00px;font-size:19.7px;letter-spacing:-0.303px;color:#fff;">11C</span>
<svg width="1865" height="932"><path d="M93.2 379 L108.4 379 L100.80000000000001 387.3 Z" fill="#fff"/></svg>
<span class="t " style="left:163.92px;top:373.00px;font-size:23.5px;letter-spacing:-0.778px;color:#64b46a;">EId:</span>
<span class="t " style="left:209.14px;top:373.00px;font-size:23.5px;letter-spacing:-0.247px;color:#64b46a;">9004</span>
<span class="t " style="left:289.82px;top:373.00px;font-size:23.5px;letter-spacing:-0.959px;color:#62be22;">DAB2 OE</span>
<div style="position:absolute;left:483px;top:352px;width:278px;height:59px;overflow:hidden"><div style="position:absolute;left:-483px;top:-352px;width:1865px;height:932px">
<span class="t " style="left:415.62px;top:373.00px;font-size:23.5px;letter-spacing:0.311px;color:#ffffff;">2023-07-10</span>
<span class="t " style="left:551.96px;top:373.00px;font-size:23.5px;letter-spacing:-0.421px;color:#ffffff;">09:56:10 Z</span>
</div></div>
<div style="position:absolute;left:142px;top:352px;width:341px;height:59px;overflow:hidden"><div style="position:absolute;left:-142px;top:-352px;width:1865px;height:932px">
<span class="t " style="left:415.62px;top:373.00px;font-size:23.5px;letter-spacing:0.311px;color:#66b866;">2023-07-10</span>
<span class="t " style="left:551.96px;top:373.00px;font-size:23.5px;letter-spacing:-0.421px;color:#66b866;">09:56:10 Z</span>
</div></div>
<div style="position:absolute;left:781px;top:367px;width:36px;height:31px;border:1px solid #8c8c8c;border-radius:4px;background:#262626"></div>
<svg width="1865" height="932"><path d="M791.5 379 L807 379 L799.25 387.5 Z" fill="#fff"/></svg>
<div class="dot" style="left:854px;top:368px;width:34px;height:34px;background:#1b6196"></div>
<div class="dot" style="left:863.4px;top:377.4px;width:15.2px;height:15.2px;background:#ff0000"></div>
<div class="dot" style="left:906.3px;top:368px;width:34px;height:34px;background:#1f4a6e"></div>
<div style="position:absolute;left:917px;top:377.5px;width:12.6px;height:15.0px;background:#1a1a1a;"></div>
<div style="position:absolute;left:1795px;top:365px;width:78px;height:31px;border:1px solid #8c8c8c;border-radius:4px;background:#262626"></div>
<span class="t " style="left:1796.82px;top:373.00px;font-size:18.5px;letter-spacing:0.044px;color:#fff;">DAB</span>
<svg width="1865" height="932"><path d="M1852 377 L1868 377 L1860.0 385.5 Z" fill="#fff"/></svg>
<div style="position:absolute;left:0px;top:412.3px;width:1865px;height:519.7px;background:#1b5a8a;"></div>
<div style="position:absolute;left:0px;top:412.3px;width:291px;height:50.7px;background:#102e52;"></div>
<span class="t " style="left:4.08px;top:423.00px;font-size:29px;letter-spacing:0.073px;color:#ffff00;">No Service Selected</span>
<span class="t " style="left:6.40px;top:476.00px;font-size:22.5px;letter-spacing:0.012px;color:#fff;">DR</span>
<span class="t " style="left:44.80px;top:476.00px;font-size:22.5px;letter-spacing:-2.238px;color:#fff;">P1</span>
<span class="t " style="left:6.40px;top:513.00px;font-size:22.5px;letter-spacing:0.012px;color:#fff;">DR</span>
<span class="t " style="left:44.80px;top:513.00px;font-size:22.5px;letter-spacing:-0.625px;color:#fff;">P2</span>
<span class="t " style="left:6.40px;top:551.00px;font-size:22.5px;letter-spacing:0.012px;color:#fff;">DR</span>
<span class="t " style="left:44.80px;top:551.00px;font-size:22.5px;letter-spacing:-0.850px;color:#fff;">P3</span>
<span class="t " style="left:6.40px;top:589.00px;font-size:22.5px;letter-spacing:0.012px;color:#fff;">DR</span>
<span class="t " style="left:44.80px;top:589.00px;font-size:22.5px;letter-spacing:-1.188px;color:#fff;">P4</span>
<span class="t " style="left:77.20px;top:589.00px;font-size:22.5px;letter-spacing:1.209px;color:#fff;">Bornholm</span>
<span class="t " style="left:6.40px;top:627.00px;font-size:22.5px;letter-spacing:0.012px;color:#fff;">DR</span>
<span class="t " style="left:44.80px;top:627.00px;font-size:22.5px;letter-spacing:-1.188px;color:#fff;">P4</span>
<span class="t " style="left:77.20px;top:627.00px;font-size:22.5px;letter-spacing:0.400px;color:#fff;">Fyn</span>
<span class="t " style="left:6.40px;top:665.00px;font-size:22.5px;letter-spacing:0.012px;color:#fff;">DR</span>
<span class="t " style="left:44.80px;top:665.00px;font-size:22.5px;letter-spacing:-1.188px;color:#fff;">P4</span>
<span class="t " style="left:77.20px;top:665.00px;font-size:22.5px;letter-spacing:0.672px;color:#fff;">København</span>
<span class="t " style="left:6.40px;top:703.00px;font-size:22.5px;letter-spacing:0.012px;color:#fff;">DR</span>
<span class="t " style="left:44.80px;top:703.00px;font-size:22.5px;letter-spacing:-1.188px;color:#fff;">P4</span>
<span class="t " style="left:77.99px;top:703.00px;font-size:22.5px;letter-spacing:0.377px;color:#fff;">Sjælland</span>
<span class="t " style="left:6.40px;top:741.00px;font-size:22.5px;letter-spacing:0.012px;color:#fff;">DR</span>
<span class="t " style="left:44.80px;top:741.00px;font-size:22.5px;letter-spacing:-1.188px;color:#fff;">P4</span>
<span class="t " style="left:77.99px;top:741.00px;font-size:22.5px;letter-spacing:-0.419px;color:#fff;">Syd</span>
<span class="t " style="left:6.40px;top:779.00px;font-size:22.5px;letter-spacing:0.012px;color:#fff;">DR</span>
<span class="t " style="left:44.80px;top:779.00px;font-size:22.5px;letter-spacing:-0.850px;color:#fff;">P5</span>
<span class="t " style="left:77.20px;top:779.00px;font-size:22.5px;letter-spacing:1.209px;color:#fff;">Bornholm</span>
<span class="t " style="left:6.40px;top:817.00px;font-size:22.5px;letter-spacing:0.012px;color:#fff;">DR</span>
<span class="t " style="left:44.80px;top:817.00px;font-size:22.5px;letter-spacing:-0.850px;color:#fff;">P5</span>
<span class="t " style="left:77.20px;top:817.00px;font-size:22.5px;letter-spacing:0.400px;color:#fff;">Fyn</span>
<span class="t " style="left:6.40px;top:854.00px;font-size:22.5px;letter-spacing:0.012px;color:#fff;">DR</span>
<span class="t " style="left:44.80px;top:854.00px;font-size:22.5px;letter-spacing:-0.850px;color:#fff;">P5</span>
<span class="t " style="left:77.20px;top:854.00px;font-size:22.5px;letter-spacing:0.672px;color:#fff;">København</span>
<span class="t " style="left:6.40px;top:892.00px;font-size:22.5px;letter-spacing:0.012px;color:#fff;">DR</span>
<span class="t " style="left:44.80px;top:892.00px;font-size:22.5px;letter-spacing:-0.850px;color:#fff;">P5</span>
<span class="t " style="left:77.99px;top:892.00px;font-size:22.5px;letter-spacing:0.377px;color:#fff;">Sjælland</span>
<span class="t " style="left:6.40px;top:930.00px;font-size:22.5px;letter-spacing:0.012px;color:#fff;">DR</span>
<span class="t " style="left:44.80px;top:930.00px;font-size:22.5px;letter-spacing:-0.850px;color:#fff;">P5</span>
<span class="t " style="left:77.99px;top:930.00px;font-size:22.5px;letter-spacing:-0.419px;color:#fff;">Syd</span>
<div style="position:absolute;left:290.3px;top:412.3px;width:7.7px;height:519.7px;background:#efeeee;"></div>
<div style="position:absolute;left:298px;top:412.3px;width:271.5px;height:50.7px;background:#102e52;"></div>
<span class="t " style="left:304.69px;top:423.00px;font-size:29px;letter-spacing:0.070px;color:#fff;">Service Quality</span>
<span class="t " style="left:313.32px;top:491.00px;font-size:19.6px;letter-spacing:-0.247px;color:#fff;">SNR (dB)</span>
<div style="position:absolute;left:493px;top:480px;width:60px;height:37px;background:#808080;"></div>
<div style="position:absolute;left:493px;top:480px;width:32.7px;height:37px;background:#008000;"></div>
<span class="t " style="left:506.67px;top:492.00px;font-size:16.8px;letter-spacing:0.000px;color:#fff;">19,3</span>
<span class="t " style="left:312.63px;top:537.00px;font-size:19.6px;letter-spacing:0.006px;color:#fff;">FIC (ok %)</span>
<div style="position:absolute;left:493px;top:526px;width:60px;height:37px;background:#808080;"></div>
<div style="position:absolute;left:493px;top:526px;width:60px;height:37px;background:#008000;"></div>
<span class="t " style="left:508.98px;top:538.00px;font-size:16.8px;letter-spacing:0.000px;color:#fff;">100</span>
<span class="t " style="left:312.63px;top:583.00px;font-size:19.6px;letter-spacing:-0.017px;color:#fff;">RS (ok %)</span>
<div style="position:absolute;left:493px;top:572px;width:60px;height:37px;background:#808080;"></div>
<span class="t " style="left:312.63px;top:629.00px;font-size:19.6px;letter-spacing:0.818px;color:#fff;">Null Symbol</span>
<div style="position:absolute;left:493px;top:618px;width:60px;height:37px;background:#808080;"></div>
<div style="position:absolute;left:493px;top:618px;width:60px;height:37px;background:#008000;"></div>
<span class="t " style="left:313.32px;top:675.00px;font-size:19.6px;letter-spacing:0.484px;color:#fff;">SymbolTime (ms)</span>
<div style="position:absolute;left:493px;top:664px;width:60px;height:37px;background:#808080;"></div>
<div style="position:absolute;left:493px;top:664px;width:12.3px;height:37px;background:#008000;"></div>
<span class="t " style="left:506.84px;top:677.00px;font-size:16.8px;letter-spacing:0.000px;color:#fff;">0,34</span>
<span class="t " style="left:312.63px;top:722.00px;font-size:19.6px;letter-spacing:0.345px;color:#fff;">FrameTime (ms)</span>
<div style="position:absolute;left:493px;top:710px;width:60px;height:37px;background:#808080;"></div>
<div style="position:absolute;left:493px;top:710px;width:37.68px;height:37px;background:#008000;"></div>
<span class="t " style="left:506.96px;top:723.00px;font-size:16.8px;letter-spacing:0.000px;color:#fff;">95,9</span>
<div style="position:absolute;left:570px;top:412.3px;width:4px;height:519.7px;background:#c0c8d8;"></div>
<div style="position:absolute;left:574px;top:412.3px;width:417px;height:100.2px;background:#102e52;"></div>
<div style="position:absolute;left:574px;top:464px;width:10px;height:48.5px;background:#1b5a8a;"></div>
<svg width="1865" height="932"><path d="M586 464 L586 428 Q586 423 591 423 L755.0 423 C764.4 423 772 430.6 772 440.0 L772 464 Z" fill="#828282" stroke="#8f98a6" stroke-width="1"/></svg>
<svg width="1865" height="932"><path d="M774.5 464 L774.5 428 Q774.5 423 779.5 423 L993.0 423 C1002.4 423 1010 430.6 1010 440.0 L1010 464 Z" fill="#828282" stroke="#8f98a6" stroke-width="1"/></svg>
<svg width="1865" height="932"><path d="M586 512.5 L586 477 Q586 472 591 472 L710.5 472 C719.9 472 727.5 479.6 727.5 489.0 L727.5 512.5 Z" fill="#828282" stroke="#8f98a6" stroke-width="1"/></svg>
<svg width="1865" height="932"><path d="M845.5 512.5 L845.5 477 Q845.5 472 850.5 472 L993.0 472 C1002.4 472 1010 479.6 1010 489.0 L1010 512.5 Z" fill="#828282" stroke="#8f98a6" stroke-width="1"/></svg>
<svg width="1865" height="932"><path d="M728 513.5 L728 477 Q728 472 733 472 L827.0 472 C836.4 472 844 479.6 844 489.0 L844 513.5 Z" fill="#1b5a8a" stroke="#3f78a6" stroke-width="1"/></svg>
<div style="position:absolute;left:728.6px;top:511.5px;width:114.8px;height:3.0px;background:#1b5a8a;"></div>
<span class="t " style="left:656.40px;top:435.00px;font-size:23.6px;letter-spacing:-0.286px;color:#cdcdcd;">AAC</span>
<span class="t " style="left:843.34px;top:435.00px;font-size:23.6px;letter-spacing:1.531px;color:#cdcdcd;">Options</span>
<span class="t " style="left:630.74px;top:485.00px;font-size:23.6px;letter-spacing:-0.053px;color:#cdcdcd;">Sync</span>
<span class="t " style="left:773.13px;top:485.00px;font-size:23.6px;letter-spacing:0.251px;color:#ffffff;">TII</span>
<span class="t " style="left:891.20px;top:485.00px;font-size:23.6px;letter-spacing:1.761px;color:#cdcdcd;">Audio</span>
<div style="position:absolute;left:983.5px;top:512.5px;width:1.0px;height:419.5px;background:#4f86b0;"></div>
<div class="dot" style="left:626.9px;top:528.4px;width:13.2px;height:13.2px;background:#ff0000"></div>
<div style="position:absolute;left:670.2px;top:528px;width:12.8px;height:14px;background:#12304f;"></div>
<div style="position:absolute;left:597.3px;top:557px;width:370.7px;height:1.2px;background:#7fa8c8;"></div>
<span class="t " style="left:595.78px;top:588.00px;font-size:21.5px;letter-spacing:0.597px;color:#fff;">Pattern</span>
<span class="t " style="left:696.48px;top:588.00px;font-size:21.5px;letter-spacing:1.342px;color:#fff;">MainId</span>
<span class="t " style="left:796.33px;top:588.00px;font-size:21.5px;letter-spacing:0.536px;color:#fff;">SubId</span>
<span class="t " style="left:883.23px;top:588.00px;font-size:21.5px;letter-spacing:0.699px;color:#fff;">Strength</span>
<div style="position:absolute;left:597.3px;top:611px;width:370.7px;height:1.2px;background:#9fbcd6;"></div>
<span class="t " style="left:598.81px;top:634.00px;font-size:19.7px;letter-spacing:0.674px;color:#fff;">0x17</span>
<span class="t " style="left:700.42px;top:634.00px;font-size:19.7px;letter-spacing:0.000px;color:#fff;">1</span>
<span class="t " style="left:798.91px;top:634.00px;font-size:19.7px;letter-spacing:0.000px;color:#fff;">2</span>
<span class="t " style="left:886.21px;top:634.00px;font-size:19.7px;letter-spacing:0.420px;color:#fff;">0.98</span>
<span class="t " style="left:598.81px;top:671.00px;font-size:19.7px;letter-spacing:1.108px;color:#fff;">0x1b</span>
<span class="t " style="left:699.81px;top:671.00px;font-size:19.7px;letter-spacing:0.000px;color:#fff;">2</span>
<span class="t " style="left:800.12px;top:671.00px;font-size:19.7px;letter-spacing:0.700px;color:#fff;">10</span>
<span class="t " style="left:886.21px;top:671.00px;font-size:19.7px;letter-spacing:0.485px;color:#fff;">0.32</span>
<div style="position:absolute;left:991px;top:412.3px;width:7.5px;height:519.7px;background:#f2f2f2;"></div>
<div style="position:absolute;left:998.5px;top:412.3px;width:866.5px;height:29.7px;background:#102e52;"></div>
<div style="position:absolute;left:998.5px;top:442px;width:866.5px;height:477px;background:#000000;"></div>
<div style="position:absolute;left:998.5px;top:919px;width:866.5px;height:8px;background:#878a8e;"></div>
<span class="t " style="left:1285.12px;top:417.00px;font-size:21.5px;letter-spacing:-0.030px;color:#fff;">Channel Impulse Response (CIR)</span>
<svg width="1865" height="932"><path d="M1840.5 419.5 L1858.5 419.5 L1849.5 435.5 Z" fill="none" stroke="#d6e2f0" stroke-width="1.2"/></svg>
<div style="position:absolute;left:1246px;top:442px;width:1px;height:477px;background:#1c1c1c;"></div>
<div class="dot" style="left:1013.75px;top:459.65px;width:19.5px;height:19.5px;background:#dedede"></div>
<span class="t " style="left:1038.59px;top:463.00px;font-size:17.6px;letter-spacing:-0.525px;color:#fff;">Freeze</span>
<div class="dot" style="left:1120.25px;top:459.65px;width:19.5px;height:19.5px;background:#dedede"></div>
<span class="t " style="left:1145.92px;top:463.00px;font-size:17.6px;letter-spacing:0.182px;color:#fff;">Gradient</span>
<span class="t " style="left:1020.61px;top:524.00px;font-size:17.6px;letter-spacing:0.236px;color:#fff;">Smoothing Level</span>
<div class="track" style="left:1035.6px;top:564.5999999999999px;width:195.4000000000001px"></div>
<div class="track" style="left:1014px;top:564.5999999999999px;width:29.59999999999991px"></div>
<div style="position:absolute;left:1022.80px;top:549.5px;width:2px;height:6.5px;background:#cfcfcf"></div>
<div style="position:absolute;left:1042.48px;top:551px;width:2px;height:5px;background:#cfcfcf"></div>
<div style="position:absolute;left:1062.16px;top:551px;width:2px;height:5px;background:#cfcfcf"></div>
<div style="position:absolute;left:1081.84px;top:551px;width:2px;height:5px;background:#cfcfcf"></div>
<div style="position:absolute;left:1101.52px;top:551px;width:2px;height:5px;background:#cfcfcf"></div>
<div style="position:absolute;left:1121.20px;top:551px;width:2px;height:5px;background:#cfcfcf"></div>
<div style="position:absolute;left:1140.88px;top:551px;width:2px;height:5px;background:#cfcfcf"></div>
<div style="position:absolute;left:1160.56px;top:551px;width:2px;height:5px;background:#cfcfcf"></div>
<div style="position:absolute;left:1180.24px;top:551px;width:2px;height:5px;background:#cfcfcf"></div>
<div style="position:absolute;left:1199.92px;top:551px;width:2px;height:5px;background:#cfcfcf"></div>
<div style="position:absolute;left:1219.60px;top:549.5px;width:2px;height:6.5px;background:#cfcfcf"></div>
<div class="thumb" style="left:1033.3px;top:556.0px"></div>
<span class="t " style="left:1020.47px;top:605.00px;font-size:17.6px;letter-spacing:0.256px;color:#fff;">Zoom X</span>
<div class="track" style="left:1016px;top:640.0999999999999px;width:215px"></div>
<div class="track" style="left:1014px;top:640.0999999999999px;width:10px"></div>
<div class="thumb" style="left:1013.7px;top:631.5px"></div>
<span class="t " style="left:1020.47px;top:680.00px;font-size:17.6px;letter-spacing:0.326px;color:#fff;">Zoom Y</span>
<div class="track" style="left:1016px;top:714.6999999999999px;width:215px"></div>
<div class="track" style="left:1014px;top:714.6999999999999px;width:10px"></div>
<div class="thumb" style="left:1013.7px;top:706.1px"></div>
<span class="t " style="left:1020.82px;top:755.00px;font-size:17.6px;letter-spacing:-0.016px;color:#fff;">x-Axis</span>
<div class="dot" style="left:1030.5px;top:783.6999999999999px;width:15.4px;height:15.4px;background:#fff;border:1px solid #8a8a8a"></div>
<span class="t " style="left:1056.21px;top:785.00px;font-size:17.6px;letter-spacing:-0.193px;color:#fff;">Samples</span>
<div class="dot" style="left:1030.5px;top:813.8px;width:15.4px;height:15.4px;background:#fff;border:1px solid #8a8a8a"></div>
<div class="dot" style="left:1034.7px;top:818.0px;width:9px;height:9px;background:#333"></div>
<span class="t " style="left:1055.59px;top:815.00px;font-size:17.6px;letter-spacing:0.093px;color:#fff;">Distance</span>
<div class="dot" style="left:1030.5px;top:843.9px;width:15.4px;height:15.4px;background:#fff;border:1px solid #8a8a8a"></div>
<span class="t " style="left:1056.65px;top:845.00px;font-size:17.6px;letter-spacing:0.200px;color:#fff;">Time</span>
<svg width="1865" height="932"><rect x="1380.5" y="471.6" width="10" height="353.79999999999995" fill="#454545"/><line x1="1423.5" y1="471.6" x2="1423.5" y2="825.4" stroke="#848484" stroke-width="1"/><line x1="1455.5" y1="471.6" x2="1455.5" y2="825.4" stroke="#848484" stroke-width="1"/><line x1="1487.5" y1="471.6" x2="1487.5" y2="825.4" stroke="#848484" stroke-width="1"/><line x1="1519.5" y1="471.6" x2="1519.5" y2="825.4" stroke="#848484" stroke-width="1"/><line x1="1551.5" y1="471.6" x2="1551.5" y2="825.4" stroke="#848484" stroke-width="1"/><line x1="1582.5" y1="471.6" x2="1582.5" y2="825.4" stroke="#848484" stroke-width="1"/><line x1="1614.5" y1="471.6" x2="1614.5" y2="825.4" stroke="#848484" stroke-width="1"/><line x1="1646.5" y1="471.6" x2="1646.5" y2="825.4" stroke="#848484" stroke-width="1"/><line x1="1678.5" y1="471.6" x2="1678.5" y2="825.4" stroke="#848484" stroke-width="1"/><line x1="1710.5" y1="471.6" x2="1710.5" y2="825.4" stroke="#848484" stroke-width="1"/><line x1="1742.5" y1="471.6" x2="1742.5" y2="825.4" stroke="#848484" stroke-width="1"/><line x1="1773.5" y1="471.6" x2="1773.5" y2="825.4" stroke="#848484" stroke-width="1"/><line x1="1805.5" y1="471.6" x2="1805.5" y2="825.4" stroke="#848484" stroke-width="1"/><line x1="1837.5" y1="471.6" x2="1837.5" y2="825.4" stroke="#848484" stroke-width="1"/><line x1="1370" y1="542.5" x2="1843" y2="542.5" stroke="#848484" stroke-width="1"/><line x1="1370" y1="613.5" x2="1843" y2="613.5" stroke="#848484" stroke-width="1"/><line x1="1370" y1="684.5" x2="1843" y2="684.5" stroke="#848484" stroke-width="1"/><line x1="1370" y1="755.5" x2="1843" y2="755.5" stroke="#848484" stroke-width="1"/><line x1="1369.3" y1="470.9" x2="1844.7" y2="470.9" stroke="#a2a2a2" stroke-width="1.8"/><line x1="1369.8" y1="470" x2="1369.8" y2="826" stroke="#989898" stroke-width="1"/><line x1="1843.5" y1="470" x2="1843.5" y2="826" stroke="#9c9c9c" stroke-width="2.4"/><line x1="1369.3" y1="825.5" x2="1844.7" y2="825.5" stroke="#a2a2a2" stroke-width="1.1"/><line x1="1391.5" y1="471.6" x2="1391.5" y2="825.4" stroke="#e6e650" stroke-width="1" stroke-dasharray="1 1"/><polyline points="1371.0,795.5 1371.5,755.9 1372.0,756.0 1372.5,727.3 1373.0,743.3 1373.5,754.2 1374.0,780.1 1374.5,708.7 1375.0,735.4 1375.5,726.4 1376.0,738.7 1376.5,737.1 1377.0,750.0 1377.5,755.4 1378.0,769.8 1378.5,737.4 1379.0,735.4 1379.5,708.4 1380.0,749.6 1380.5,733.6 1381.0,804.8 1381.5,718.2 1382.0,729.2 1382.5,726.9 1383.0,741.9 1383.5,728.4 1384.0,727.5 1384.5,724.9 1385.0,735.0 1385.5,723.9 1386.0,729.9 1386.5,704.8 1387.0,720.4 1387.5,712.8 1388.0,706.2 1388.5,706.9 1389.0,715.4 1389.5,685.3 1390.0,694.7 1390.5,677.3 1391.0,672.0 1391.5,674.8 1392.0,581.2 1392.5,609.5 1393.0,668.8 1393.5,677.8 1394.0,694.0 1394.5,711.1 1395.0,686.7 1395.5,723.2 1396.0,701.5 1396.5,729.4 1397.0,710.0 1397.5,724.1 1398.0,726.2 1398.5,759.5 1399.0,705.5 1399.5,757.5 1400.0,724.0 1400.5,744.9 1401.0,705.8 1401.5,729.9 1402.0,759.5 1402.5,750.9 1403.0,736.8 1403.5,720.6 1404.0,745.2 1404.5,740.8 1405.0,752.9 1405.5,737.6 1406.0,721.3 1406.5,796.4 1407.0,740.0 1407.5,738.8 1408.0,742.6 1408.5,753.5 1409.0,755.1 1409.5,728.3 1410.0,764.8 1410.5,759.1 1411.0,788.1 1411.5,745.0 1412.0,728.5 1412.5,758.1 1413.0,757.7 1413.5,746.5 1414.0,742.4 1414.5,766.2 1415.0,779.4 1415.5,725.3 1416.0,754.3 1416.5,811.7 1417.0,777.0 1417.5,780.3 1418.0,737.7 1418.5,744.6 1419.0,735.8 1419.5,735.9 1420.0,762.8 1420.5,761.6 1421.0,749.8 1421.5,755.3 1422.0,726.8 1422.5,733.2 1423.0,750.8 1423.5,737.7 1424.0,752.7 1424.5,749.1 1425.0,735.6 1425.5,793.8 1426.0,770.2 1426.5,748.5 1427.0,722.8 1427.5,773.7 1428.0,740.6 1428.5,808.3 1429.0,750.0 1429.5,825.4 1430.0,731.4 1430.5,737.0 1431.0,775.5 1431.5,739.6 1432.0,763.5 1432.5,823.8 1433.0,791.6 1433.5,753.5 1434.0,747.9 1434.5,784.5 1435.0,767.7 1435.5,743.3 1436.0,763.3 1436.5,764.0 1437.0,774.2 1437.5,789.2 1438.0,734.0 1438.5,774.4 1439.0,769.5 1439.5,770.0 1440.0,806.6 1440.5,745.8 1441.0,664.5 1441.5,646.2 1442.0,778.7 1442.5,757.3 1443.0,748.8 1443.5,726.0 1444.0,743.3 1444.5,727.1 1445.0,769.7 1445.5,737.8 1446.0,787.5 1446.5,749.0 1447.0,793.4 1447.5,755.0 1448.0,769.7 1448.5,753.9 1449.0,735.6 1449.5,727.1 1450.0,804.5 1450.5,745.3 1451.0,755.4 1451.5,755.2 1452.0,757.9 1452.5,718.5 1453.0,744.3 1453.5,735.5 1454.0,733.5 1454.5,745.6 1455.0,769.2 1455.5,747.0 1456.0,730.6 1456.5,780.6 1457.0,728.1 1457.5,772.8 1458.0,744.4 1458.5,737.5 1459.0,725.8 1459.5,730.3 1460.0,744.6 1460.5,753.5 1461.0,742.0 1461.5,734.1 1462.0,754.7 1462.5,746.8 1463.0,731.7 1463.5,731.8 1464.0,747.7 1464.5,733.1 1465.0,731.7 1465.5,701.6 1466.0,740.3 1466.5,708.8 1467.0,745.9 1467.5,740.1 1468.0,714.6 1468.5,740.5 1469.0,762.4 1469.5,767.7 1470.0,699.0 1470.5,755.4 1471.0,704.8 1471.5,755.5 1472.0,727.6 1472.5,726.3 1473.0,717.9 1473.5,715.6 1474.0,726.0 1474.5,705.1 1475.0,716.2 1475.5,692.7 1476.0,704.2 1476.5,711.6 1477.0,704.2 1477.5,693.0 1478.0,691.3 1478.5,690.7 1479.0,713.3 1479.5,697.1 1480.0,684.7 1480.5,706.9 1481.0,698.1 1481.5,684.0 1482.0,687.7 1482.5,687.8 1483.0,682.8 1483.5,684.9 1484.0,664.8 1484.5,676.1 1485.0,669.1 1485.5,664.8 1486.0,633.7 1486.5,639.3 1487.0,560.4 1487.5,561.9 1488.0,640.3 1488.5,641.1 1489.0,660.9 1489.5,667.4 1490.0,675.0 1490.5,670.3 1491.0,684.9 1491.5,697.1 1492.0,683.1 1492.5,701.2 1493.0,686.8 1493.5,716.7 1494.0,699.7 1494.5,698.6 1495.0,699.9 1495.5,686.3 1496.0,691.8 1496.5,670.0 1497.0,623.5 1497.5,600.2 1498.0,668.6 1498.5,680.5 1499.0,679.4 1499.5,694.5 1500.0,695.4 1500.5,720.7 1501.0,703.7 1501.5,721.7 1502.0,706.8 1502.5,717.5 1503.0,704.2 1503.5,712.7 1504.0,710.8 1504.5,728.2 1505.0,735.7 1505.5,724.6 1506.0,721.7 1506.5,709.6 1507.0,737.1 1507.5,717.4 1508.0,735.7 1508.5,716.6 1509.0,722.2 1509.5,723.5 1510.0,734.7 1510.5,726.9 1511.0,740.6 1511.5,736.5 1512.0,731.0 1512.5,708.5 1513.0,749.2 1513.5,743.2 1514.0,735.0 1514.5,725.3 1515.0,720.8 1515.5,740.4 1516.0,734.8 1516.5,754.3 1517.0,749.6 1517.5,762.6 1518.0,675.3 1518.5,691.9 1519.0,723.3 1519.5,783.8 1520.0,744.1 1520.5,744.9 1521.0,760.1 1521.5,757.0 1522.0,726.9 1522.5,758.5 1523.0,730.5 1523.5,734.4 1524.0,781.5 1524.5,743.5 1525.0,725.1 1525.5,751.7 1526.0,763.7 1526.5,781.5 1527.0,735.5 1527.5,737.1 1528.0,726.4 1528.5,774.9 1529.0,752.1 1529.5,750.8 1530.0,772.6 1530.5,749.7 1531.0,754.7 1531.5,715.9 1532.0,760.5 1532.5,746.8 1533.0,734.6 1533.5,774.9 1534.0,780.6 1534.5,765.4 1535.0,763.3 1535.5,799.7 1536.0,723.4 1536.5,734.6 1537.0,733.7 1537.5,724.1 1538.0,723.7 1538.5,759.6 1539.0,788.8 1539.5,726.9 1540.0,723.9 1540.5,726.3 1541.0,735.2 1541.5,704.2 1542.0,747.2 1542.5,770.6 1543.0,726.0 1543.5,720.5 1544.0,710.8 1544.5,722.8 1545.0,730.1 1545.5,712.0 1546.0,698.3 1546.5,687.2 1547.0,623.2 1547.5,622.4 1548.0,683.6 1548.5,706.2 1549.0,726.9 1549.5,702.3 1550.0,758.3 1550.5,708.1 1551.0,754.0 1551.5,730.8 1552.0,746.8 1552.5,737.1 1553.0,734.9 1553.5,716.0 1554.0,755.2 1554.5,733.3 1555.0,752.7 1555.5,769.2 1556.0,817.9 1556.5,745.6 1557.0,750.8 1557.5,739.1 1558.0,767.0 1558.5,746.6 1559.0,763.3 1559.5,743.9 1560.0,751.1 1560.5,820.6 1561.0,787.3 1561.5,796.9 1562.0,758.0 1562.5,759.4 1563.0,767.0 1563.5,788.0 1564.0,770.7 1564.5,759.8 1565.0,746.6 1565.5,754.5 1566.0,797.6 1566.5,749.3 1567.0,750.9 1567.5,767.3 1568.0,729.2 1568.5,747.3 1569.0,781.8 1569.5,764.3 1570.0,766.0 1570.5,763.6 1571.0,792.2 1571.5,760.0 1572.0,801.1 1572.5,782.3 1573.0,775.0 1573.5,752.9 1574.0,787.7 1574.5,775.9 1575.0,778.8 1575.5,813.3 1576.0,741.4 1576.5,784.0 1577.0,750.2 1577.5,746.0 1578.0,766.3 1578.5,776.6 1579.0,775.7 1579.5,754.6 1580.0,756.1 1580.5,739.4 1581.0,755.4 1581.5,751.6 1582.0,739.7 1582.5,794.6 1583.0,764.6 1583.5,745.5 1584.0,762.0 1584.5,808.3 1585.0,747.9 1585.5,773.6 1586.0,728.5 1586.5,768.0 1587.0,752.2 1587.5,743.1 1588.0,754.5 1588.5,767.0 1589.0,757.2 1589.5,754.9 1590.0,789.4 1590.5,787.2 1591.0,816.4 1591.5,760.2 1592.0,761.4 1592.5,763.4 1593.0,756.8 1593.5,770.8 1594.0,777.7 1594.5,763.6 1595.0,750.7 1595.5,735.1 1596.0,754.9 1596.5,759.0 1597.0,799.4 1597.5,825.4 1598.0,774.4 1598.5,820.9 1599.0,758.4 1599.5,746.5 1600.0,774.4 1600.5,800.3 1601.0,809.0 1601.5,761.1 1602.0,825.4 1602.5,787.6 1603.0,763.7 1603.5,801.7 1604.0,751.9 1604.5,813.8 1605.0,751.9 1605.5,757.5 1606.0,825.4 1606.5,778.9 1607.0,748.1 1607.5,752.7 1608.0,731.4 1608.5,764.6 1609.0,766.9 1609.5,743.5 1610.0,749.7 1610.5,751.0 1611.0,746.3 1611.5,735.4 1612.0,776.3 1612.5,825.4 1613.0,759.9 1613.5,792.0 1614.0,757.4 1614.5,790.4 1615.0,775.3 1615.5,774.1 1616.0,784.7 1616.5,758.0 1617.0,814.9 1617.5,797.4 1618.0,802.1 1618.5,783.5 1619.0,751.0 1619.5,735.2 1620.0,812.4 1620.5,777.8 1621.0,783.3 1621.5,810.9 1622.0,794.7 1622.5,770.3 1623.0,793.7 1623.5,802.5 1624.0,787.6 1624.5,761.2 1625.0,796.3 1625.5,786.4 1626.0,782.3 1626.5,782.7 1627.0,743.2 1627.5,752.2 1628.0,797.4 1628.5,740.2 1629.0,763.2 1629.5,727.5 1630.0,765.4 1630.5,763.8 1631.0,739.6 1631.5,751.5 1632.0,794.3 1632.5,757.7 1633.0,773.3 1633.5,744.2 1634.0,756.4 1634.5,813.4 1635.0,765.2 1635.5,825.4 1636.0,778.3 1636.5,753.0 1637.0,758.4 1637.5,760.9 1638.0,817.1 1638.5,764.3 1639.0,779.6 1639.5,760.0 1640.0,825.4 1640.5,793.0 1641.0,788.0 1641.5,775.2 1642.0,800.4 1642.5,797.0 1643.0,800.4 1643.5,789.0 1644.0,765.8 1644.5,787.0 1645.0,771.4 1645.5,788.8 1646.0,753.1 1646.5,779.1 1647.0,759.3 1647.5,784.4 1648.0,719.4 1648.5,803.9 1649.0,776.7 1649.5,771.3 1650.0,774.4 1650.5,810.6 1651.0,782.3 1651.5,774.7 1652.0,825.4 1652.5,752.2 1653.0,757.7 1653.5,809.4 1654.0,768.6 1654.5,777.1 1655.0,765.8 1655.5,774.5 1656.0,808.9 1656.5,809.9 1657.0,785.8 1657.5,772.9 1658.0,825.4 1658.5,753.3 1659.0,825.4 1659.5,809.3 1660.0,743.8 1660.5,812.7 1661.0,790.6 1661.5,780.3 1662.0,779.2 1662.5,773.4 1663.0,790.5 1663.5,818.1 1664.0,778.4 1664.5,737.3 1665.0,749.4 1665.5,746.1 1666.0,789.6 1666.5,818.1 1667.0,765.6 1667.5,801.7 1668.0,795.3 1668.5,738.6 1669.0,768.9 1669.5,754.0 1670.0,760.9 1670.5,743.7 1671.0,770.1 1671.5,750.2 1672.0,760.6 1672.5,825.4 1673.0,790.9 1673.5,770.0 1674.0,755.1 1674.5,738.5 1675.0,824.8 1675.5,794.0 1676.0,739.6 1676.5,745.3 1677.0,723.0 1677.5,825.4 1678.0,776.5 1678.5,764.8 1679.0,762.7 1679.5,772.4 1680.0,756.3 1680.5,801.3 1681.0,784.5 1681.5,750.4 1682.0,751.8 1682.5,763.6 1683.0,752.5 1683.5,774.5 1684.0,770.8 1684.5,793.2 1685.0,745.4 1685.5,765.3 1686.0,759.5 1686.5,775.2 1687.0,755.2 1687.5,778.6 1688.0,755.1 1688.5,786.0 1689.0,800.4 1689.5,801.4 1690.0,778.4 1690.5,788.9 1691.0,790.7 1691.5,733.2 1692.0,825.4 1692.5,825.4 1693.0,748.9 1693.5,773.2 1694.0,769.5 1694.5,769.3 1695.0,748.2 1695.5,798.7 1696.0,825.4 1696.5,783.3 1697.0,779.7 1697.5,822.9 1698.0,770.8 1698.5,768.6 1699.0,756.3 1699.5,755.8 1700.0,775.6 1700.5,786.9 1701.0,766.6 1701.5,809.0 1702.0,756.5 1702.5,781.8 1703.0,825.4 1703.5,779.3 1704.0,770.6 1704.5,790.9 1705.0,748.8 1705.5,821.1 1706.0,766.9 1706.5,787.6 1707.0,742.3 1707.5,775.2 1708.0,787.8 1708.5,815.3 1709.0,801.6 1709.5,825.4 1710.0,804.2 1710.5,782.6 1711.0,747.9 1711.5,776.9 1712.0,751.9 1712.5,754.9 1713.0,822.7 1713.5,750.7 1714.0,757.1 1714.5,781.0 1715.0,813.9 1715.5,752.2 1716.0,802.6 1716.5,749.8 1717.0,793.2 1717.5,795.8 1718.0,766.6 1718.5,760.2 1719.0,741.7 1719.5,771.4 1720.0,807.4 1720.5,752.8 1721.0,758.2 1721.5,770.1 1722.0,737.5 1722.5,775.5 1723.0,747.0 1723.5,778.8 1724.0,797.3 1724.5,763.2 1725.0,769.5 1725.5,825.4 1726.0,757.9 1726.5,742.0 1727.0,761.6 1727.5,769.6 1728.0,729.3 1728.5,738.0 1729.0,775.8 1729.5,760.5 1730.0,812.0 1730.5,756.0 1731.0,783.6 1731.5,762.5 1732.0,778.0 1732.5,763.0 1733.0,793.8 1733.5,774.8 1734.0,798.1 1734.5,728.2 1735.0,825.4 1735.5,792.8 1736.0,771.5 1736.5,825.4 1737.0,762.0 1737.5,767.6 1738.0,797.2 1738.5,750.3 1739.0,787.1 1739.5,780.4 1740.0,794.4 1740.5,741.0 1741.0,766.2 1741.5,766.9 1742.0,742.6 1742.5,718.0 1743.0,811.7 1743.5,783.8 1744.0,779.9 1744.5,764.4 1745.0,766.8 1745.5,792.0 1746.0,803.1 1746.5,740.4 1747.0,754.9 1747.5,771.6 1748.0,825.4 1748.5,757.6 1749.0,825.4 1749.5,745.8 1750.0,766.8 1750.5,789.6 1751.0,736.0 1751.5,766.4 1752.0,825.4 1752.5,769.6 1753.0,765.7 1753.5,825.4 1754.0,763.3 1754.5,785.3 1755.0,786.5 1755.5,757.9 1756.0,750.6 1756.5,773.4 1757.0,825.4 1757.5,763.3 1758.0,778.0 1758.5,751.6 1759.0,787.2 1759.5,756.3 1760.0,742.8 1760.5,749.6 1761.0,769.8 1761.5,799.5 1762.0,772.3 1762.5,786.6 1763.0,760.6 1763.5,765.3 1764.0,807.9 1764.5,786.0 1765.0,775.2 1765.5,739.6 1766.0,768.9 1766.5,743.8 1767.0,734.5 1767.5,770.1 1768.0,762.6 1768.5,768.6 1769.0,748.9 1769.5,819.2 1770.0,795.1 1770.5,743.6 1771.0,797.5 1771.5,775.0 1772.0,780.9 1772.5,754.6 1773.0,798.0 1773.5,790.4 1774.0,787.2 1774.5,762.1 1775.0,792.9 1775.5,775.3 1776.0,825.4 1776.5,809.4 1777.0,825.4 1777.5,772.4 1778.0,758.7 1778.5,796.9 1779.0,760.6 1779.5,779.4 1780.0,732.4 1780.5,795.8 1781.0,825.4 1781.5,792.4 1782.0,734.8 1782.5,766.1 1783.0,822.1 1783.5,742.4 1784.0,768.2 1784.5,756.0 1785.0,810.2 1785.5,813.5 1786.0,766.8 1786.5,777.0 1787.0,744.2 1787.5,825.4 1788.0,751.9 1788.5,825.4 1789.0,765.3 1789.5,795.4 1790.0,769.0 1790.5,781.3 1791.0,756.0 1791.5,817.8 1792.0,783.3 1792.5,760.3 1793.0,761.4 1793.5,745.2 1794.0,759.9 1794.5,802.0 1795.0,747.2 1795.5,761.1 1796.0,768.8 1796.5,765.2 1797.0,825.4 1797.5,746.3 1798.0,762.0 1798.5,753.7 1799.0,783.0 1799.5,791.5 1800.0,825.4 1800.5,749.1 1801.0,797.3 1801.5,753.0 1802.0,792.5 1802.5,766.3 1803.0,758.8 1803.5,755.5 1804.0,778.1 1804.5,798.3 1805.0,815.2 1805.5,751.1 1806.0,783.6 1806.5,779.5 1807.0,784.1 1807.5,823.9 1808.0,776.2 1808.5,810.2 1809.0,797.2 1809.5,763.2 1810.0,756.7 1810.5,768.2 1811.0,803.4 1811.5,771.4 1812.0,821.8 1812.5,746.0 1813.0,772.4 1813.5,765.9 1814.0,804.0 1814.5,737.3 1815.0,768.3 1815.5,822.0 1816.0,753.8 1816.5,732.1 1817.0,771.3 1817.5,767.6 1818.0,795.3 1818.5,825.4 1819.0,794.4 1819.5,761.9 1820.0,777.6 1820.5,755.7 1821.0,778.8 1821.5,776.1 1822.0,755.0 1822.5,817.6 1823.0,774.4 1823.5,744.1 1824.0,754.0 1824.5,743.8 1825.0,783.4 1825.5,780.0 1826.0,764.2 1826.5,792.4 1827.0,793.7 1827.5,769.7 1828.0,805.8 1828.5,789.6 1829.0,795.4 1829.5,803.5 1830.0,803.7 1830.5,760.8 1831.0,741.3 1831.5,825.4 1832.0,752.3 1832.5,766.1 1833.0,737.1 1833.5,785.4 1834.0,810.7 1834.5,746.2 1835.0,755.0 1835.5,825.4 1836.0,742.7 1836.5,750.8 1837.0,774.2 1837.5,764.0 1838.0,774.9 1838.5,796.6 1839.0,766.4 1839.5,791.0 1840.0,755.7 1840.5,750.9 1841.0,786.7 1841.5,757.1" fill="none" stroke="#f6f6f6" stroke-width="1.05" stroke-linejoin="bevel"/><line x1="1487.3" y1="553" x2="1487.3" y2="684.1500000000001" stroke="#f4f4f4" stroke-width="1.6"/><line x1="1391.8" y1="585" x2="1391.8" y2="698.32" stroke="#f4f4c0" stroke-width="1.4"/><line x1="1497.6" y1="596" x2="1497.6" y2="684.1500000000001" stroke="#f4f4f4" stroke-width="1.2"/><line x1="1547.2" y1="614" x2="1547.2" y2="719.575" stroke="#f4f4f4" stroke-width="1.6"/><line x1="1550.5" y1="755.0" x2="1550.5" y2="825.4" stroke="#e0e0e0" stroke-width="2"/><circle cx="1391.6" cy="579" r="5.9" fill="#e8141c"/><circle cx="1487.3" cy="546.7" r="5.9" fill="#f8f020"/><circle cx="1497.9" cy="626" r="5.9" fill="#1e9ee0"/><circle cx="1547.2" cy="608" r="5.9" fill="#7a2ad8"/></svg>
<span class="t " style="left:1312.50px;top:462.00px;font-size:20.4px;letter-spacing:0.000px;color:#fff;">-10.0</span>
<span class="t " style="left:1312.50px;top:532.00px;font-size:20.4px;letter-spacing:0.000px;color:#fff;">-20.0</span>
<span class="t " style="left:1312.50px;top:603.00px;font-size:20.4px;letter-spacing:0.000px;color:#fff;">-30.0</span>
<span class="t " style="left:1312.50px;top:674.00px;font-size:20.4px;letter-spacing:0.000px;color:#fff;">-40.0</span>
<span class="t " style="left:1312.50px;top:745.00px;font-size:20.4px;letter-spacing:0.000px;color:#fff;">-50.0</span>
<span class="t " style="left:1312.50px;top:816.00px;font-size:20.4px;letter-spacing:0.000px;color:#fff;">-60.0</span>
<span class="t " style="left:1380.35px;top:834.00px;font-size:15.6px;letter-spacing:0.000px;color:#fff;">-60</span>
<span class="t " style="left:1412.19px;top:854.00px;font-size:15.6px;letter-spacing:0.000px;color:#fff;">-40</span>
<span class="t " style="left:1444.03px;top:834.00px;font-size:15.6px;letter-spacing:0.000px;color:#fff;">-20</span>
<span class="t " style="left:1482.85px;top:854.00px;font-size:15.6px;letter-spacing:0.000px;color:#fff;">0</span>
<span class="t " style="left:1510.29px;top:834.00px;font-size:15.6px;letter-spacing:0.000px;color:#fff;">20</span>
<span class="t " style="left:1542.36px;top:854.00px;font-size:15.6px;letter-spacing:0.000px;color:#fff;">40</span>
<span class="t " style="left:1573.97px;top:834.00px;font-size:15.6px;letter-spacing:0.000px;color:#fff;">60</span>
<span class="t " style="left:1605.88px;top:854.00px;font-size:15.6px;letter-spacing:0.000px;color:#fff;">80</span>
<span class="t " style="left:1633.12px;top:834.00px;font-size:15.6px;letter-spacing:0.000px;color:#fff;">100</span>
<span class="t " style="left:1664.96px;top:854.00px;font-size:15.6px;letter-spacing:0.000px;color:#fff;">120</span>
<span class="t " style="left:1696.80px;top:834.00px;font-size:15.6px;letter-spacing:0.000px;color:#fff;">140</span>
<span class="t " style="left:1728.64px;top:854.00px;font-size:15.6px;letter-spacing:0.000px;color:#fff;">160</span>
<span class="t " style="left:1760.48px;top:834.00px;font-size:15.6px;letter-spacing:0.000px;color:#fff;">180</span>
<span class="t " style="left:1792.52px;top:854.00px;font-size:15.6px;letter-spacing:0.000px;color:#fff;">200</span>
<span class="t " style="left:1824.36px;top:834.00px;font-size:15.6px;letter-spacing:0.000px;color:#fff;">220</span>
<span class="t " style="left:1495.40px;top:878.00px;font-size:20.2px;letter-spacing:0.000px;color:#fff;">Distance Difference (km)</span>
<span class="t" style="left:0;top:0;font-size:20px;color:#fff;transform-origin:0 0;transform:translate(1273.57px,718.55px) rotate(-90deg)">Magnitude (dB)</span>
</body></html>
